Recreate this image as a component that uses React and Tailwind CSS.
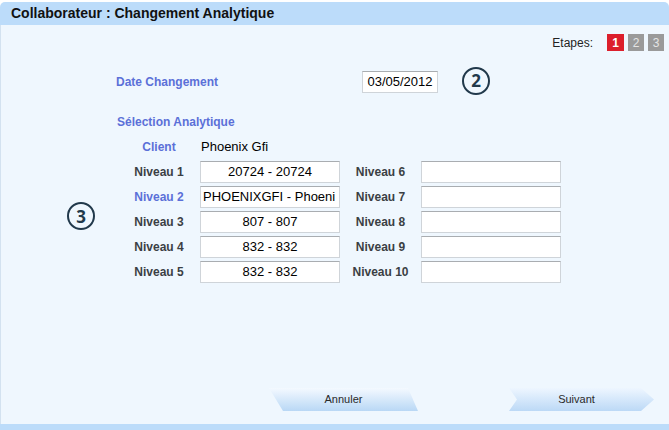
import React from "react";

const font = { fontFamily: '"Liberation Sans", Arial, sans-serif' };

function Field({ value, align = "center" }) {
  return (
    <div
      className={`h-[22px] w-[140px] overflow-hidden whitespace-nowrap border border-[#cfd4d9] border-t-[#a9adb1] bg-white px-[2px] text-[13px] leading-[20px] text-black ${
        align === "left" ? "text-left" : "text-center"
      }`}
    >
      {value}
    </div>
  );
}

function Label({ children, blue }) {
  return (
    <div className={`text-center text-[12px] font-bold ${blue ? "text-[#5b70d8]" : "text-[#3b3f44]"}`}>
      {children}
    </div>
  );
}

function Circled({ n }) {
  return (
    <div
      className="flex h-[28px] w-[28px] shrink-0 items-center justify-center rounded-full border-[2.5px] border-[#21394b] text-[17px] font-bold leading-none text-[#21394b]"
      style={{ fontFamily: '"Open Sans", sans-serif' }}
    >
      {n}
    </div>
  );
}

export default function App() {
  const rows = [
    ["Niveau 1", "20724 - 20724", false, "Niveau 6"],
    ["Niveau 2", "PHOENIXGFI - Phoeni", true, "Niveau 7"],
    ["Niveau 3", "807 - 807", false, "Niveau 8"],
    ["Niveau 4", "832 - 832", false, "Niveau 9"],
    ["Niveau 5", "832 - 832", false, "Niveau 10"],
  ];

  return (
    <div className="flex h-[430px] w-[669px] flex-col bg-white pt-[2px]" style={font}>
      {/* Header */}
      <div className="flex h-[23px] items-center rounded-t-[5px] bg-[#bcdcfa] pl-[11px] text-[14px] font-bold text-[#111]">
        Collaborateur : Changement Analytique
      </div>

      {/* Body */}
      <div className="flex flex-1 flex-col border-l border-[#d3e2f0] bg-[#eff7fe]">
        {/* Etapes */}
        <div className="mt-[9px] flex h-[17px] items-center justify-end pr-[5px]">
          <span className="mr-[14px] text-[12px] text-[#222]">Etapes:</span>
          <div className="flex gap-[4px]">
            <span className="flex h-[17px] w-[17px] items-center justify-center bg-[#dc1f2c] text-[12px] font-bold text-white">1</span>
            <span className="flex h-[17px] w-[16px] items-center justify-center bg-[#9a9a9a] text-[12px] text-[#e4e4e4]">2</span>
            <span className="flex h-[17px] w-[16px] items-center justify-center bg-[#9a9a9a] text-[12px] text-[#e4e4e4]">3</span>
          </div>
        </div>

        {/* Date */}
        <div className="mt-[20px] flex h-[22px] items-center pl-[115px]">
          <div className="w-[246px] text-[12px] font-bold text-[#5b70d8]">Date Changement</div>
          <div className="h-[22px] w-[76px] border border-[#cfd4d9] border-t-[#a9adb1] bg-white text-center text-[13px] leading-[20px] text-black">
            03/05/2012
          </div>
          <div className="ml-[24px] mt-[-3px]">
            <Circled n="2" />
          </div>
        </div>

        {/* Sélection */}
        <div className="mt-[22px] pl-[116px] text-[12px] font-bold leading-[14px] text-[#5b70d8]">
          Sélection Analytique
        </div>

        <div className="mt-[5px] flex pl-[66px]">
          <div className="mt-[68px]">
            <Circled n="3" />
          </div>
          <div className="ml-[23px] grid grid-cols-[82px_140px_81px_140px] auto-rows-[25px] items-center">
            <Label blue>Client</Label>
            <div className="col-span-3 pl-[1px] text-[13px] text-black">Phoenix Gfi</div>
            {rows.map(([l, v, blue, r]) => (
              <React.Fragment key={l}>
                <Label blue={blue}>{l}</Label>
                <Field value={v} align={blue ? "left" : "center"} />
                <Label>{r}</Label>
                <Field value="" />
              </React.Fragment>
            ))}
          </div>
        </div>

        {/* Buttons */}
        <div className="mb-[13px] mt-auto flex items-center pl-[268px]">
          <div className="flex h-[23px] w-[149px] items-center justify-center bg-gradient-to-b from-[#f4f9ff] to-[#b9d8f5] text-[11px] text-[#2a2a2a] [clip-path:polygon(0_0,139px_0,149px_100%,14px_100%)]">
            Annuler
          </div>
          <div className="ml-[91px] flex h-[23px] w-[145px] items-center justify-center bg-gradient-to-b from-[#eef6ff] to-[#bcd9f6] pr-[10px] text-[11px] text-[#2a2a2a] [clip-path:polygon(0_0,132px_0,145px_50%,132px_100%,0_100%,8px_50%)]">
            Suivant
          </div>
        </div>
      </div>

      {/* Bottom bar */}
      <div className="h-[6px] bg-[#bcdcfa]" />
    </div>
  );
}
